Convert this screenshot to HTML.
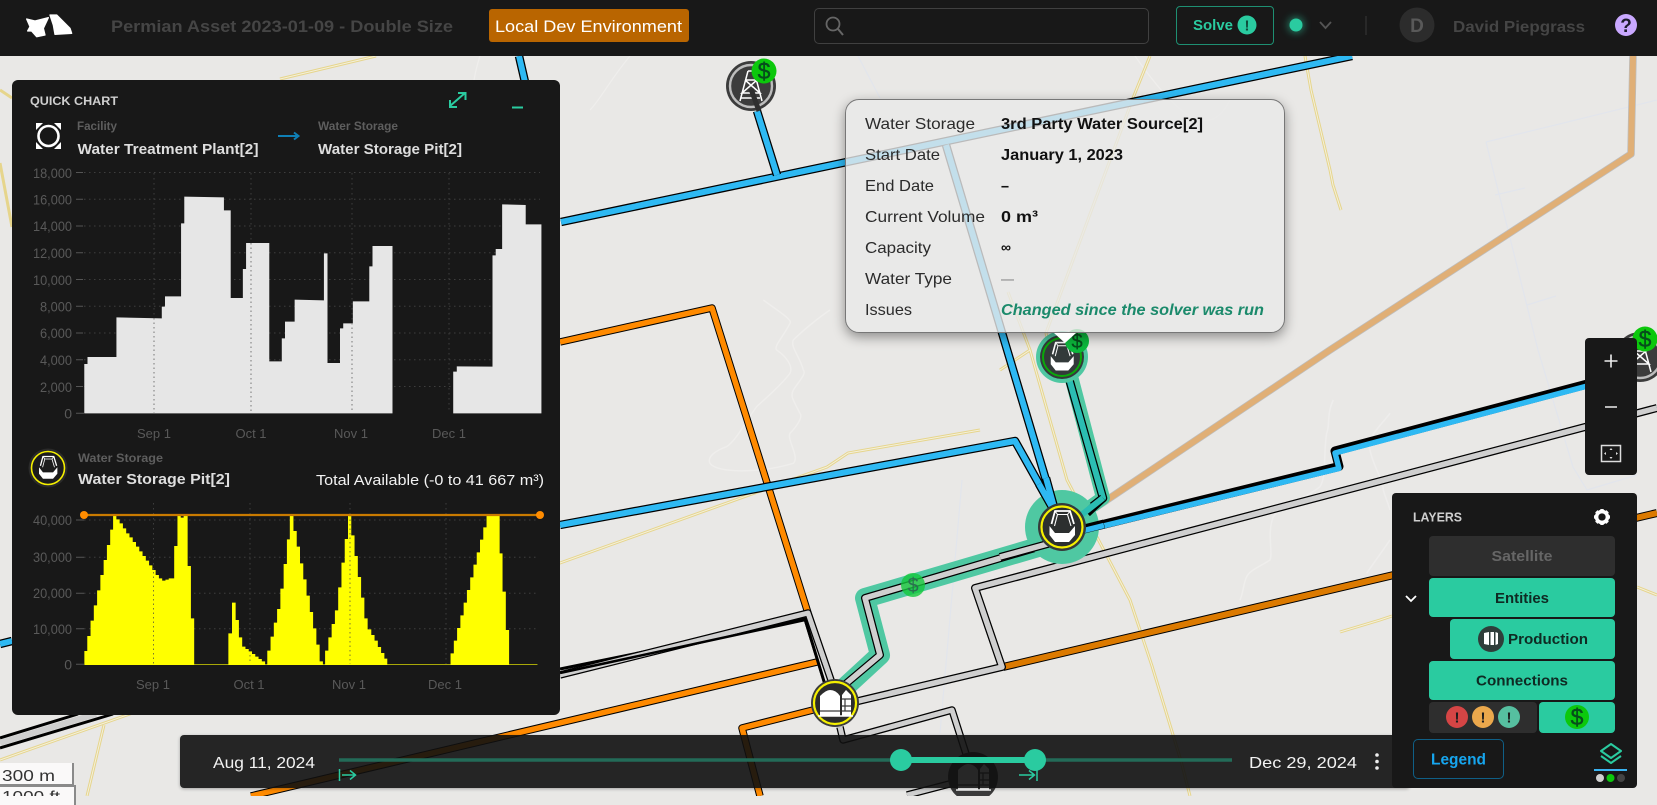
<!DOCTYPE html>
<html lang="en"><head><meta charset="utf-8"><title>Permian Asset</title>
<style>
html,body{margin:0;padding:0;width:1657px;height:796px;overflow:hidden;background:#e9e8e6;font-family:"Liberation Sans",sans-serif}
.a{position:absolute;box-sizing:border-box}
svg{position:absolute;left:0;top:0}
text{font-family:"Liberation Sans",sans-serif}
.k{fill:none;stroke:#000;stroke-linejoin:round;stroke-linecap:butt}
.n{fill:none;stroke-linejoin:round;stroke-linecap:butt}
.y1{fill:none;stroke:#e6d58c;stroke-width:3}
.y2{fill:none;stroke:#f4f0dc;stroke-width:1}
.w{fill:none;stroke:#f0efee;stroke-width:1.3}
.p{fill:none;stroke:#e2e5ec;stroke-width:1.2}
.ax{fill:#595959;font-size:13px}
.tl{fill:#2b2b2b;font-size:16px}
.tv{fill:#111;font-size:16px;font-weight:bold}
</style></head><body>

<svg width="1657" height="796" viewBox="0 0 1657 796">
<defs>
<filter id="glow" x="-100%" y="-100%" width="300%" height="300%"><feGaussianBlur stdDeviation="4"/></filter>
<g id="pit">
<path d="M-12.5,-1 L-7,6 L7,6 L13,-1 L13,8 L7,15 L-7,15 L-12.5,8 Z" fill="#fff"/>
<path d="M-10.5,-3 L-7,-16 L8,-16 L12,-3" fill="none" stroke="#fff" stroke-width="1.8" stroke-linejoin="round"/>
<path d="M-7.5,-1 L-4.5,-12.5 L5.5,-12.5 L9,-1" fill="none" stroke="#fff" stroke-width="1.1" stroke-linejoin="round"/>
<path d="M-7,-16 L-4.5,-12.5 M8,-16 L5.5,-12.5" stroke="#fff" stroke-width="1"/>
</g>
<g id="plant">
<path d="M-15,13 L-15,-7 Q-9,-13 -5,-13 Q1,-13 5,-7 L5,13 Z" fill="#fff"/>
<path d="M7,13 L7,-8 L11,-13 L16,-8 L16,13 Z" fill="#fff"/>
<path d="M-15,8 H5 M7,-4 H16 M7,3 H16 M7,8 H16 M10,-4 V8" stroke="#3a3a3a" stroke-width="1.2"/>
<path d="M-17,13 H18" stroke="#fff" stroke-width="1.5"/>
</g>
</defs>

<!-- contours -->
<g transform="translate(560,300) scale(.3333)" opacity=".8">
<path class="w" style="stroke-width:4.5" d="M610,0 C650,30 700,60 690,70 C670,110 640,140 650,150 C680,170 700,200 690,220 C660,260 600,310 590,320 C560,360 530,420 500,440 C470,450 440,470 450,490 C470,520 600,520 700,490 C720,470 680,420 690,400 C710,380 730,350 720,340 C700,300 690,290 700,270 C720,240 740,220 730,210 C720,170 690,140 700,120 C730,90 780,50 810,30"/>
</g>
<g transform="translate(1090,400) scale(.3333)" opacity=".8">
<path class="w" style="stroke-width:4.5" d="M730,0 C710,40 720,80 710,100 C700,160 710,230 690,260 C640,300 570,320 550,350 C530,400 550,460 540,480 C510,500 480,510 470,530 C460,550 460,580 450,600"/>
<path class="w" style="stroke-width:4.5" d="M900,40 C870,80 830,110 840,150 C850,200 880,240 880,270 C885,290 895,310 900,330 M900,420 C880,450 850,490 830,520"/>
</g>
<path class="w" opacity=".8" d="M480,56 C472,80 472,100 470,110 M630,56 C610,80 600,100 590,110 M1135,56 C1180,120 1210,140 1230,100 M1440,570 C1460,610 1460,650 1440,680 M1600,500 C1640,560 1640,600 1620,640"/>
<path class="p" d="M1486,142 L1657,100 M1486,142 L1538,350 L1573,467 L1587,490 L1637,475 M1495,195 L1525,188 M1527,305 L1556,296 M962,480 L940,733 M858,56 L880,98"/>

<!-- yellow roads -->
<g>
<path class="y1" d="M280,79 L376,56"/><path class="y2" d="M280,79 L376,56"/>
<path class="y1" d="M0,90 L12,98"/><path class="y1" d="M0,163 L12,227"/>
<path class="y1" d="M1150,56 L1133,98 L1046,333 L1052,360"/><path class="y2" d="M1150,56 L1133,98 L1046,333 L1052,360"/>
<path class="y1" d="M1305,56 L1311,90 L1330,170 L1333,185 L1341,210"/><path class="y2" d="M1305,56 L1311,90 L1330,170 L1333,185 L1341,210"/>
<path class="y1" d="M1008,292 L1030,350 L1000,370 M1030,350 L1067,480 L1130,600 L1152,666 L1181,761 L1190,796"/><path class="y2" d="M1008,292 L1030,350 L1000,370 M1030,350 L1067,480 L1130,600 L1152,666 L1181,761 L1190,796"/>
<path class="y1" d="M0,760 L127,715 L560,563 L827,467 L848,453 L980,430"/><path class="y2" d="M0,760 L127,715 L560,563 L827,467 L848,453 L980,430"/>
<path class="y1" d="M104,725 L87,796"/><path class="y2" d="M104,725 L87,796"/>
<path class="y1" d="M1392,616 L1380,620 L1340,632 M1637,587 L1657,595"/><path class="y2" d="M1392,616 L1380,620 L1340,632 M1637,587 L1657,595"/>
</g>

<!-- tan -->
<path class="n" d="M1633,56 L1631,154 L1330,350 L1095,508" stroke="#bdbdbd" stroke-width="7.5"/>
<path class="n" d="M1633,56 L1631,154 L1330,350 L1095,508" stroke="#e0af76" stroke-width="6"/>

<!-- orange -->
<path class="k" stroke-width="7.5" d="M560,342 L712,308 L808,613"/><path class="n" stroke="#ff8a00" stroke-width="5.5" d="M560,342 L712,308 L808,613"/>
<path class="k" stroke-width="7.5" d="M251,796 L817,662"/><path class="n" stroke="#ff8a00" stroke-width="5.5" d="M251,796 L817,662"/>
<path class="k" stroke-width="7.5" d="M813,710 L742,728 L760,796"/><path class="n" stroke="#ff8a00" stroke-width="5.5" d="M813,710 L742,728 L760,796"/>
<path class="k" stroke-width="8" d="M1003,667 L1657,513"/><path class="n" stroke="#dc7a00" stroke-width="6" d="M1003,667 L1657,513"/>

<!-- blue -->
<path class="k" stroke-width="8.5" d="M561,222 L1352,56"/><path class="n" stroke="#2eb9f3" stroke-width="6" d="M561,222 L1352,56"/>
<path class="k" stroke-width="8.5" d="M757,111 L777,175"/><path class="n" stroke="#2eb9f3" stroke-width="6" d="M757,111 L777,175"/>
<path class="k" stroke-width="8.5" d="M519,56 L525,82"/><path class="n" stroke="#2eb9f3" stroke-width="6" d="M519,56 L525,82"/>
<path class="k" stroke-width="8.5" d="M946,145 L1054,507"/><path class="n" stroke="#2eb9f3" stroke-width="6" d="M946,145 L1054,507"/>
<path class="k" stroke-width="8.5" d="M0,644 L12,641 M560,525 L1015,441 L1052,507"/><path class="n" stroke="#2eb9f3" stroke-width="6" d="M0,644 L12,641 M560,525 L1015,441 L1052,507"/>
<path class="k" stroke-width="9" d="M1062,534.5 L1339,466.5 L1335,451 L1657,365.5" /><path class="n" stroke="#2eb9f3" stroke-width="5.5" d="M1062,536 L1339,468.5 L1335,453 L1657,367.5"/>

<!-- grey -->
<path class="k" stroke-width="8" d="M1657,408 L975,588 L1002,667 L850,703"/><path class="n" stroke="#cfcfcf" stroke-width="5.5" d="M1657,408 L975,588 L1002,667 L850,703"/>
<path class="k" stroke-width="3" d="M560,669 L805,619 L826,688"/>
<path class="k" stroke-width="7.5" d="M560,675 L808,613 L832,683"/><path class="n" stroke="#cfcfcf" stroke-width="5" d="M560,675 L808,613 L832,683"/>
<path class="k" stroke-width="2.5" d="M560,673 L805,620 L826,688"/>
<path class="k" stroke-width="3" d="M0,738 L78,714 M0,748 L113,714"/>
<path class="n" stroke="#cfcfcf" stroke-width="6" d="M0,743 L96,714"/>
<path class="k" stroke-width="7.5" d="M840,727 L843,740 L952,710 L967,757"/><path class="n" stroke="#cfcfcf" stroke-width="5" d="M840,727 L843,740 L952,710 L967,757"/>
<path class="k" stroke-width="7.5" d="M907,795 L957,782"/><path class="n" stroke="#cfcfcf" stroke-width="5" d="M907,795 L957,782"/>

<!-- teal highlighted -->
<path class="n" stroke="#4fc8a2" stroke-width="14" d="M1066,357 L1103,498 L1062,527"/>
<path class="k" stroke-width="8.5" d="M1068,375 L1103,498 L1075,520"/><path class="n" stroke="#2bbdb2" stroke-width="6" d="M1068,375 L1103,498 L1075,520"/>
<path class="n" stroke="#4fc8a2" stroke-width="20" d="M842,690 L880,655 L865,598 L1062,540"/>
<path class="k" stroke-width="8" d="M842,687 L880,655 L865,598 L1062,540"/><path class="n" stroke="#cfcfcf" stroke-width="5.5" d="M842,687 L880,655 L865,598 L1062,540"/>
<circle cx="913" cy="585" r="12" fill="#14c83c" fill-opacity=".8"/>
<text x="913" y="592" font-size="20" fill="#2a7050" text-anchor="middle">$</text>

<!-- tower -->
<g transform="translate(751,86)">
<circle r="25" fill="#3c3c3c"/><circle r="21" fill="#3c3c3c" stroke="#bdbdbd" stroke-width="2.4"/>
<path d="M-3,-15 H3 L11,15 M-3,-15 L-11,15 M-6,-6 H6 L-9,7 H9 L-6,-6 M-10,12 L9,12" fill="none" stroke="#fff" stroke-width="1.5"/>
<path d="M0,3 L8,25" stroke="#2f2f2f" stroke-width="5"/>
</g>
<circle cx="764" cy="71" r="12.5" fill="#0cc80c"/>
<text x="764" y="79" font-size="23" fill="#064d1c" stroke="#064d1c" stroke-width=".4" text-anchor="middle">$</text>

<!-- right tower -->
<g transform="translate(1640,357)">
<circle r="25" fill="#3c3c3c"/><circle r="21" fill="#3c3c3c" stroke="#bdbdbd" stroke-width="2.4"/>
<path d="M-3,-15 H3 L11,15 M-3,-15 L-11,15 M-6,-6 H6 L-9,7 H9 L-6,-6" fill="none" stroke="#fff" stroke-width="1.5"/>
</g>
<circle cx="1645" cy="339" r="12.5" fill="#0cc80c"/>
<text x="1645" y="347" font-size="23" fill="#064d1c" stroke="#064d1c" stroke-width=".4" text-anchor="middle">$</text>

<!-- nodes -->
<circle cx="1062" cy="357" r="26" fill="#4fc8a2"/>
<circle cx="1062" cy="357" r="22" fill="#333a3a"/>
<circle cx="1062" cy="357" r="19" fill="none" stroke="#0aa80a" stroke-width="2"/>
<g transform="translate(1062,357) scale(.9)"><use href="#pit"/></g>
<circle cx="1077" cy="341" r="12" fill="#0cb83c"/>
<text x="1077" y="348" font-size="20" fill="#064d1c" stroke="#064d1c" stroke-width=".3" text-anchor="middle">$</text>

<circle cx="1062" cy="527" r="37" fill="#4fc8a2"/>
<path class="k" stroke-width="8.5" d="M1039,484 L1052,507 M1046,478 L1054,507"/>
<path class="n" stroke="#2eb9f3" stroke-width="6" d="M1039,484 L1052,507 M1046,478 L1054,507"/>
<path class="k" stroke-width="8" d="M1000,557 L1062,540"/><path class="n" stroke="#cfcfcf" stroke-width="5.5" d="M1000,557 L1062,540"/>
<path class="k" stroke-width="9" d="M1062,534.5 L1104,524"/><path class="n" stroke="#2eb9f3" stroke-width="5.5" d="M1062,536 L1104,525.5"/>
<path class="k" stroke-width="8.5" d="M1087,513 L1103,498"/><path class="n" stroke="#2bbdb2" stroke-width="6" d="M1075,520 L1103,498"/>
<circle cx="1062" cy="527" r="24" fill="#353a3a"/>
<circle cx="1062" cy="527" r="20.5" fill="#2c2f2f" stroke="#f5f000" stroke-width="2.2"/>
<use href="#pit" x="1062" y="527"/>

<circle cx="835" cy="703" r="24" fill="#3d3d3d"/>
<circle cx="835" cy="703" r="21" fill="#2c2c2c" stroke="#f5f000" stroke-width="2.2"/>
<use href="#plant" x="835" y="703"/>

<circle cx="973" cy="777" r="25" fill="#3a3a3a"/>
<use href="#plant" x="973" y="777"/>
</svg>

<!-- scale -->
<div class="a" style="left:0;top:763px;width:74px;height:23px;background:rgba(255,255,255,.75);border-right:2px solid #8a8a8a;border-bottom:2px solid #8a8a8a"></div>
<div class="a" style="left:0;top:785px;width:76px;height:20px;background:rgba(255,255,255,.75);border-right:2px solid #8a8a8a;border-top:2px solid #8a8a8a"></div>

<!-- header -->
<div class="a" style="left:0;top:0;width:1657px;height:56px;background:#181818"></div>
<div class="a" style="left:489px;top:9px;width:200px;height:33px;background:#b96500;border-radius:3px"></div>
<div class="a" style="left:814px;top:8px;width:335px;height:36px;border:1px solid #404040;border-radius:5px"></div>
<div class="a" style="left:1176px;top:6px;width:98px;height:39px;border:1px solid #1e8f72;border-radius:4px"></div>

<!-- quick chart panel -->
<div class="a" style="left:12px;top:80px;width:548px;height:635px;background:#181818;border-radius:6px"></div>

<!-- tooltip -->
<div class="a" style="left:845px;top:99px;width:440px;height:234px;background:rgba(233,233,233,.8);border:1px solid #777;border-radius:14px;box-shadow:0 4px 12px rgba(0,0,0,.4)"></div>

<!-- timeline -->
<div class="a" style="left:180px;top:735px;width:1230px;height:53px;background:rgba(16,16,16,.9);border-radius:4px;box-shadow:0 1px 3px rgba(0,0,0,.3)"></div>

<!-- zoom + layers -->
<div class="a" style="left:1585px;top:338px;width:52px;height:137px;background:#181818;border-radius:4px"></div>
<div class="a" style="left:1392px;top:493px;width:245px;height:295px;background:#181818;border-radius:4px"></div>
<div class="a" style="left:1429px;top:536px;width:186px;height:40px;background:#2e2e2e;border-radius:4px"></div>
<div class="a" style="left:1429px;top:578px;width:186px;height:39px;background:#2acba0;border-radius:4px"></div>
<div class="a" style="left:1450px;top:619px;width:165px;height:40px;background:#2acba0;border-radius:4px"></div>
<div class="a" style="left:1429px;top:661px;width:186px;height:39px;background:#2acba0;border-radius:4px"></div>
<div class="a" style="left:1429px;top:702px;width:108px;height:31px;background:#2e2e2e;border-radius:4px"></div>
<div class="a" style="left:1539px;top:702px;width:76px;height:31px;background:#2acba0;border-radius:4px"></div>
<div class="a" style="left:1413px;top:739px;width:91px;height:40px;border:1px solid #0f5f86;border-radius:5px"></div>

<!-- overlay -->
<svg width="1657" height="796" viewBox="0 0 1657 796">
<!-- logo -->
<g transform="translate(15,5) scale(.3333)" fill="#fff" stroke="#fff" stroke-width="4" stroke-linejoin="round">
<path d="M35,42 L60,48 L100,38 L85,70 L90,90 L65,95 L50,78 L38,78 L45,65 Z"/>
<path d="M105,30 L125,30 L165,70 L170,85 L120,88 L115,60 Z"/>
</g>
<text x="111" y="32" font-size="17" font-weight="bold" fill="#454545" textLength="342" lengthAdjust="spacingAndGlyphs">Permian Asset 2023-01-09 - Double Size</text>
<text x="495" y="32" font-size="17" fill="#fff" textLength="187" lengthAdjust="spacingAndGlyphs">Local Dev Environment</text>
<circle cx="833" cy="24" r="6.5" fill="none" stroke="#666" stroke-width="1.8"/><path d="M838,29 L843,35" stroke="#666" stroke-width="2"/>
<text x="1193" y="30" font-size="15" font-weight="bold" fill="#2acba0" textLength="40" lengthAdjust="spacingAndGlyphs">Solve</text>
<circle cx="1247" cy="25" r="9.5" fill="#2acba0"/>
<text x="1247" y="30.5" font-size="15" font-weight="bold" fill="#0f4a3a" text-anchor="middle">!</text>
<circle cx="1296" cy="25" r="8" fill="#2acba0" opacity=".55" filter="url(#glow)"/>
<circle cx="1296" cy="25" r="6.5" fill="#2acba0"/>
<path d="M1320,22 L1325.5,28 L1331,22" fill="none" stroke="#555" stroke-width="1.8"/>
<path d="M1366,16 V35" stroke="#333" stroke-width="1.2"/>
<circle cx="1417" cy="25" r="17.5" fill="#2c2c2c"/>
<text x="1417" y="32" font-size="19" font-weight="bold" fill="#595959" text-anchor="middle">D</text>
<text x="1453" y="32" font-size="16" font-weight="bold" fill="#454545" textLength="132" lengthAdjust="spacingAndGlyphs">David Piepgrass</text>
<circle cx="1626" cy="25" r="11" fill="#c9a8ff"/>
<text x="1626" y="32" font-size="19" font-weight="bold" fill="#1c1c2c" text-anchor="middle">?</text>

<!-- quick chart head -->
<text x="30" y="105" font-size="12" font-weight="bold" fill="#cfcfcf" textLength="88" lengthAdjust="spacingAndGlyphs">QUICK CHART</text>
<path d="M450,106 L465,93 M450,100 V107 H457 M458,93 H465.5 V100" fill="none" stroke="#2acba0" stroke-width="2"/>
<path d="M512,107.5 H523" stroke="#2acba0" stroke-width="2"/>
<circle cx="48.5" cy="136" r="10" fill="none" stroke="#fff" stroke-width="2.6"/>
<path d="M36,123 H43 L36,130 Z M61,123 H54 L61,130 Z M36,149 H43 L36,142 Z M61,149 H54 L61,142 Z" fill="#fff"/>
<text x="77" y="130" font-size="12" font-weight="bold" fill="#5e5e5e" textLength="40" lengthAdjust="spacingAndGlyphs">Facility</text>
<text x="77.5" y="154" font-size="15" font-weight="bold" fill="#dedede" textLength="181" lengthAdjust="spacingAndGlyphs">Water Treatment Plant[2]</text>
<path d="M278,136 H298 M294,132.5 L298.5,136 L294,139.5" fill="none" stroke="#0f7fb5" stroke-width="2"/>
<text x="318" y="130" font-size="12" font-weight="bold" fill="#5e5e5e" textLength="80" lengthAdjust="spacingAndGlyphs">Water Storage</text>
<text x="318" y="154" font-size="15" font-weight="bold" fill="#dedede" textLength="144" lengthAdjust="spacingAndGlyphs">Water Storage Pit[2]</text>

<!-- chart 1 -->
<g stroke="#3e3e3e" stroke-width="1" stroke-dasharray="1.5 3.5" fill="none">
<path d="M84,172.5 H540 M84,199.3 H540 M84,226 H540 M84,252.8 H540 M84,279.5 H540 M84,306.3 H540 M84,333 H540 M84,359.8 H540 M84,386.5 H540"/>
<path d="M154,173 V413 M251,173 V413 M352,173 V413 M449,173 V413"/>
</g>
<g transform="translate(0,90) scale(.35714,.33333)">
<polygon fill="#e6e6e6" points="236,970 236,822 245,822 245,801 326,801 326,682 453,685 453,650 462,650 462,619 507,619 507,400 516,400 516,320 627,322 627,361 646,361 646,624 680,624 680,537 689,537 689,459 754,459 754,814 789,814 789,745 798,745 798,695 825,695 825,629 907,631 907,490 917,490 917,819 952,819 952,715 961,715 961,700 988,700 988,634 1034,634 1034,529 1043,529 1043,468 1099,468 1099,970 1269,970 1269,845 1279,845 1279,829 1379,830 1379,496 1388,496 1388,477 1406,477 1406,343 1472,345 1472,403 1516,403 1516,970"/>
</g>
<g stroke="#777" stroke-width="1" stroke-dasharray="1.5 3" fill="none"><path d="M154,318 V413 M251,243 V413 M352,323 V413"/></g>
<path d="M76,172.5 H83 M76,199.3 H83 M76,226 H83 M76,252.8 H83 M76,279.5 H83 M76,306.3 H83 M76,333 H83 M76,359.8 H83 M76,386.5 H83 M76,413.3 H84" stroke="#555"/>
<g class="ax" text-anchor="end" style="font-size:14px">
<text x="72" y="178" textLength="39" lengthAdjust="spacingAndGlyphs">18,000</text>
<text x="72" y="204.5" textLength="39" lengthAdjust="spacingAndGlyphs">16,000</text>
<text x="72" y="231" textLength="39" lengthAdjust="spacingAndGlyphs">14,000</text>
<text x="72" y="258" textLength="39" lengthAdjust="spacingAndGlyphs">12,000</text>
<text x="72" y="285" textLength="39" lengthAdjust="spacingAndGlyphs">10,000</text>
<text x="72" y="311.5" textLength="32" lengthAdjust="spacingAndGlyphs">8,000</text>
<text x="72" y="338" textLength="32" lengthAdjust="spacingAndGlyphs">6,000</text>
<text x="72" y="365" textLength="32" lengthAdjust="spacingAndGlyphs">4,000</text>
<text x="72" y="392" textLength="32" lengthAdjust="spacingAndGlyphs">2,000</text>
<text x="72" y="418.5">0</text>
</g>
<g class="ax" text-anchor="middle">
<text x="154" y="438">Sep 1</text><text x="251" y="438">Oct 1</text><text x="351" y="438">Nov 1</text><text x="449" y="438">Dec 1</text>
</g>

<!-- chart 2 head -->
<circle cx="48" cy="468" r="19.5" fill="#2a2a2a"/>
<circle cx="48" cy="468" r="16.5" fill="#1c1c1c" stroke="#f5f000" stroke-width="1.6"/>
<g transform="translate(48,468) scale(.72)"><use href="#pit"/></g>
<text x="78" y="462" font-size="12" font-weight="bold" fill="#5e5e5e" textLength="85" lengthAdjust="spacingAndGlyphs">Water Storage</text>
<text x="78" y="484" font-size="15" font-weight="bold" fill="#dedede" textLength="152" lengthAdjust="spacingAndGlyphs">Water Storage Pit[2]</text>
<text x="316" y="485" font-size="15" fill="#f2f2f2" textLength="228" lengthAdjust="spacingAndGlyphs">Total Available (-0 to 41 667 m³)</text>

<!-- chart 2 -->
<g stroke="#3e3e3e" stroke-width="1" stroke-dasharray="1.5 3.5" fill="none">
<path d="M84,520 H536 M84,557.3 H536 M84,593.3 H536 M84,628.7 H536"/>
<path d="M153.5,503 V664 M250,503 V664 M350,503 V664 M446,503 V664"/>
</g>
<g transform="translate(0,420) scale(.36364,.33333)">
<polygon fill="#ffff00" points="232,733 232,693 240,693 240,648 249,648 249,602 258,602 258,556 267,556 267,511 276,511 276,465 285,465 285,420 294,420 294,375 303,375 303,329 311,329 311,285 320,285 320,298 329,298 329,310 338,310 338,325 347,325 347,340 356,340 356,352 365,352 365,366 374,366 374,380 383,380 383,394 392,394 392,408 401,408 401,422 410,422 410,436 419,436 419,450 428,450 428,465 437,465 437,475 446,475 446,482 455,482 455,479 464,479 464,475 479,475 479,378 488,378 488,285 497,285 497,293 505,293 505,285 516,285 516,438 525,438 525,595 534,595 534,733 628,733 628,640 638,640 638,548 648,548 648,600 657,600 657,652 666,652 666,680 675,680 675,687 684,687 684,694 693,694 693,702 702,702 702,710 711,710 711,717 720,717 720,724 729,724 729,733 735,733 735,692 744,692 744,650 753,650 753,608 762,608 762,567 771,567 771,506 780,506 780,432 789,432 789,358 797,358 797,285 807,285 807,333 816,333 816,380 825,380 825,430 834,430 834,478 843,478 843,527 852,527 852,576 861,576 861,625 870,625 870,674 879,674 879,724 888,724 888,733 894,733 894,692 903,692 903,652 912,652 912,612 921,612 921,571 930,571 930,502 939,502 939,428 948,428 948,357 957,357 957,285 966,285 966,346 975,346 975,408 984,408 984,471 993,471 993,533 1002,533 1002,595 1011,595 1011,628 1021,628 1021,645 1030,645 1030,662 1039,662 1039,681 1048,681 1048,699 1057,699 1057,716 1065,716 1065,733 1239,733 1239,700 1248,700 1248,662 1257,662 1257,624 1266,624 1266,586 1275,586 1275,548 1284,548 1284,510 1293,510 1293,472 1302,472 1302,434 1311,434 1311,397 1320,397 1320,359 1329,359 1329,322 1338,322 1338,285 1374,285 1374,400 1382,400 1382,515 1391,515 1391,630 1400,630 1400,733 1478,733 1478,735 232,735"/>
</g>
<g stroke="#7a7a30" stroke-width="1" stroke-dasharray="1.5 3" fill="none"><path d="M153.5,572 V664 M250,655 V664 M350,515 V664"/></g>
<path d="M84,515 H540" stroke="#c97a00" stroke-width="2.2"/>
<circle cx="84" cy="515" r="4" fill="#ff8c00"/><circle cx="540" cy="515" r="4" fill="#ff8c00"/>
<path d="M76,520 H84 M76,557.3 H84 M76,593.3 H84 M76,628.7 H84 M76,664.3 H84" stroke="#555"/>
<g class="ax" text-anchor="end" style="font-size:14px">
<text x="72" y="525" textLength="39" lengthAdjust="spacingAndGlyphs">40,000</text>
<text x="72" y="562" textLength="39" lengthAdjust="spacingAndGlyphs">30,000</text>
<text x="72" y="598" textLength="39" lengthAdjust="spacingAndGlyphs">20,000</text>
<text x="72" y="634" textLength="39" lengthAdjust="spacingAndGlyphs">10,000</text>
<text x="72" y="669.5">0</text>
</g>
<g class="ax" text-anchor="middle">
<text x="153" y="689">Sep 1</text><text x="249" y="689">Oct 1</text><text x="349" y="689">Nov 1</text><text x="445" y="689">Dec 1</text>
</g>

<!-- tooltip text -->
<text class="tl" x="865" y="129" textLength="110" lengthAdjust="spacingAndGlyphs">Water Storage</text>
<text class="tl" x="865" y="160" textLength="75" lengthAdjust="spacingAndGlyphs">Start Date</text>
<text class="tl" x="865" y="191" textLength="69" lengthAdjust="spacingAndGlyphs">End Date</text>
<text class="tl" x="865" y="222" textLength="120" lengthAdjust="spacingAndGlyphs">Current Volume</text>
<text class="tl" x="865" y="253" textLength="66" lengthAdjust="spacingAndGlyphs">Capacity</text>
<text class="tl" x="865" y="284" textLength="87" lengthAdjust="spacingAndGlyphs">Water Type</text>
<text class="tl" x="865" y="315" textLength="47" lengthAdjust="spacingAndGlyphs">Issues</text>
<text class="tv" x="1001" y="129" textLength="202" lengthAdjust="spacingAndGlyphs">3rd Party Water Source[2]</text>
<text class="tv" x="1001" y="160" textLength="122" lengthAdjust="spacingAndGlyphs">January 1, 2023</text>
<text class="tv" x="1001" y="191" textLength="8" lengthAdjust="spacingAndGlyphs">–</text>
<text class="tv" x="1001" y="222" textLength="37" lengthAdjust="spacingAndGlyphs">0 m³</text>
<text class="tv" x="1001" y="252" style="font-size:14px" textLength="10" lengthAdjust="spacingAndGlyphs">∞</text>
<text x="1001" y="284" font-size="16" fill="#888" textLength="13" lengthAdjust="spacingAndGlyphs">—</text>
<text x="1001" y="315" font-size="16" font-weight="bold" font-style="italic" fill="#1b8a6b" textLength="263" lengthAdjust="spacingAndGlyphs">Changed since the solver was run</text>
<path d="M1054,333 H1076 L1065,343 Z" fill="#fff"/>

<!-- timeline -->
<text x="213" y="768" font-size="16" fill="#f2f2f2" textLength="102" lengthAdjust="spacingAndGlyphs">Aug 11, 2024</text>
<path d="M339,760 H1232" stroke="#236b58" stroke-width="3.5"/>
<path d="M901,760 H1035" stroke="#2acba0" stroke-width="6"/>
<circle cx="901" cy="760" r="11" fill="#2acba0"/><circle cx="1035" cy="760" r="11" fill="#2acba0"/>
<path d="M339.5,769 V781 M342,775 H355 M350,770.5 L355.5,775 L350,779.5" fill="none" stroke="#2acba0" stroke-width="1.5"/>
<path d="M1019,775 H1034 M1029,770.5 L1034.5,775 L1029,779.5 M1037,769 V781" fill="none" stroke="#2acba0" stroke-width="1.5"/>
<text x="1249" y="768" font-size="16" fill="#f2f2f2" textLength="108" lengthAdjust="spacingAndGlyphs">Dec 29, 2024</text>
<circle cx="1377" cy="755" r="1.8" fill="#eee"/><circle cx="1377" cy="761.5" r="1.8" fill="#eee"/><circle cx="1377" cy="768" r="1.8" fill="#eee"/>

<!-- scale text -->
<text x="2" y="781" font-size="16" fill="#333" textLength="53" lengthAdjust="spacingAndGlyphs">300 m</text>
<text x="2" y="802" font-size="16" fill="#333" textLength="58" lengthAdjust="spacingAndGlyphs">1000 ft</text>

<!-- zoom controls -->
<path d="M1604.5,361 H1617.5 M1611,354.5 V367.5 M1605,407 H1617" stroke="#eee" stroke-width="1.6"/>
<rect x="1601.5" y="445.5" width="19" height="16" fill="none" stroke="#ddd" stroke-width="1.5"/>
<path d="M1611,448 L1609.5,450 H1612.5 Z M1611,459 L1609.5,457 H1612.5 Z M1604,453.5 L1606,452 V455 Z M1618,453.5 L1616,452 V455 Z" fill="#ddd"/>

<!-- layers -->
<text x="1413" y="521.5" font-size="12.5" font-weight="bold" fill="#cfcfcf" textLength="49" lengthAdjust="spacingAndGlyphs">LAYERS</text>
<g transform="translate(1602,517) scale(1.05)" fill="#fff">
<circle r="5.2" fill="none" stroke="#fff" stroke-width="3.4"/>
<g id="t"><rect x="-1.6" y="-7.6" width="3.2" height="3.2"/><rect x="-1.6" y="4.4" width="3.2" height="3.2"/><rect x="-7.6" y="-1.6" width="3.2" height="3.2"/><rect x="4.4" y="-1.6" width="3.2" height="3.2"/></g>
<use href="#t" transform="rotate(45)"/>
</g>
<text x="1522" y="561" font-size="15" font-weight="bold" fill="#666" text-anchor="middle" textLength="61" lengthAdjust="spacingAndGlyphs">Satellite</text>
<text x="1522" y="603" font-size="15" font-weight="bold" fill="#0f2a23" text-anchor="middle" textLength="54" lengthAdjust="spacingAndGlyphs">Entities</text>
<path d="M1406,596 L1411,601 L1416,596" fill="none" stroke="#fff" stroke-width="1.8"/>
<circle cx="1491" cy="639" r="13" fill="#2f3d3a"/>
<path d="M1484,633 L1489,632 V645 L1484,644 Z M1490.5,632 H1494 V645 H1490.5 Z M1495.5,632 L1498,633 V644 L1495.5,645 Z" fill="#fff"/>
<text x="1508" y="644" font-size="15" font-weight="bold" fill="#0f2a23" textLength="80" lengthAdjust="spacingAndGlyphs">Production</text>
<text x="1522" y="685.5" font-size="15" font-weight="bold" fill="#0f2a23" text-anchor="middle" textLength="92" lengthAdjust="spacingAndGlyphs">Connections</text>
<circle cx="1457" cy="717" r="11" fill="#d54545"/><circle cx="1483" cy="717" r="11" fill="#eba84c"/><circle cx="1509" cy="717" r="11" fill="#56bfa0"/>
<g font-size="15" font-weight="bold" text-anchor="middle" fill="#1c1c1c">
<text x="1457" y="722.5">!</text><text x="1483" y="722.5">!</text><text x="1509" y="722.5">!</text>
</g>
<circle cx="1577" cy="717" r="12" fill="#0cc80c"/>
<text x="1577" y="725" font-size="23" fill="#064d1c" stroke="#064d1c" stroke-width=".4" text-anchor="middle">$</text>
<text x="1431" y="764.5" font-size="15.5" font-weight="bold" fill="#16a6ef" textLength="55" lengthAdjust="spacingAndGlyphs">Legend</text>
<path d="M1611,744 L1621,751 L1611,758 L1601,751 Z M1601,756 L1611,763 L1621,756" fill="none" stroke="#2acba0" stroke-width="2" stroke-linejoin="round"/>
<path d="M1594,770 H1627" stroke="#3ab4f2" stroke-width="2"/>
<circle cx="1600" cy="778" r="4" fill="#d0d0d0"/><circle cx="1610.5" cy="778" r="4" fill="#0cc80c"/><circle cx="1621" cy="778" r="4" fill="#444"/>
</svg>
</body></html>
